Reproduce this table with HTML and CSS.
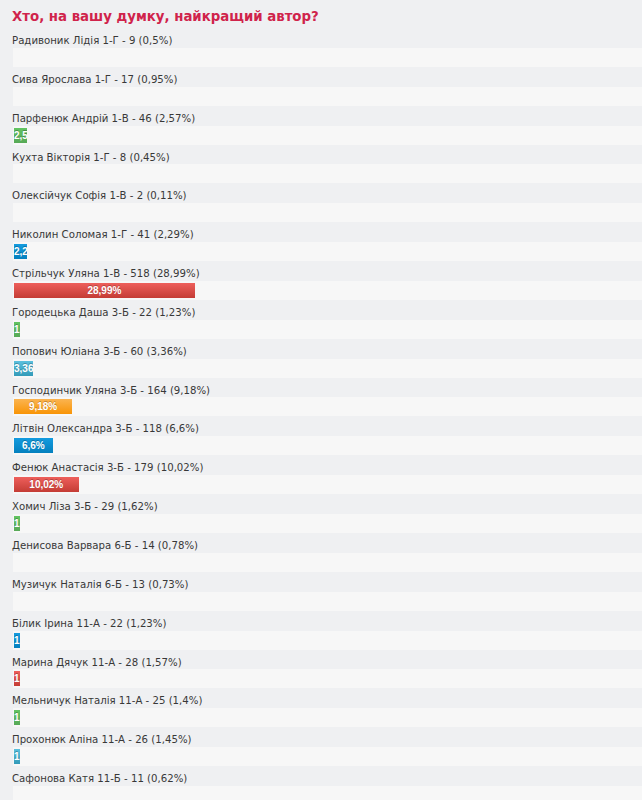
FILE: index.html
```html
<!DOCTYPE html>
<html lang="uk">
<head>
<meta charset="utf-8">
<title>Опитування</title>
<link rel="stylesheet" href="styles.css">
</head>
<body>
<div class="poll">
  <h2 class="poll-title">Хто, на вашу думку, найкращий автор?</h2>

  <div class="poll-item"><div class="poll-label">Радивоник Лідія 1-Г - 9 (0,5%)</div><div class="progress"></div></div>
  <div class="poll-item"><div class="poll-label">Сива Ярослава 1-Г - 17 (0,95%)</div><div class="progress"></div></div>
  <div class="poll-item"><div class="poll-label">Парфенюк Андрій 1-В - 46 (2,57%)</div><div class="progress"><div class="bar bar-success" style="width:2%">2,57%</div></div></div>
  <div class="poll-item"><div class="poll-label">Кухта Вікторія 1-Г - 8 (0,45%)</div><div class="progress"></div></div>
  <div class="poll-item"><div class="poll-label">Олексійчук Софія 1-В - 2 (0,11%)</div><div class="progress"></div></div>
  <div class="poll-item"><div class="poll-label">Николин Соломая 1-Г - 41 (2,29%)</div><div class="progress"><div class="bar bar-primary" style="width:2%">2,29%</div></div></div>
  <div class="poll-item"><div class="poll-label">Стрільчук Уляна 1-В - 518 (28,99%)</div><div class="progress"><div class="bar bar-danger" style="width:28%">28,99%</div></div></div>
  <div class="poll-item"><div class="poll-label">Городецька Даша 3-Б - 22 (1,23%)</div><div class="progress"><div class="bar bar-success" style="width:1%">1,23%</div></div></div>
  <div class="poll-item"><div class="poll-label">Попович Юліана 3-Б - 60 (3,36%)</div><div class="progress"><div class="bar bar-info" style="width:3%">3,36%</div></div></div>
  <div class="poll-item"><div class="poll-label">Господинчик Уляна 3-Б - 164 (9,18%)</div><div class="progress"><div class="bar bar-warning" style="width:9%">9,18%</div></div></div>
  <div class="poll-item"><div class="poll-label">Літвін Олександра 3-Б - 118 (6,6%)</div><div class="progress"><div class="bar bar-primary" style="width:6%">6,6%</div></div></div>
  <div class="poll-item"><div class="poll-label">Фенюк Анастасія 3-Б - 179 (10,02%)</div><div class="progress"><div class="bar bar-danger" style="width:10%">10,02%</div></div></div>
  <div class="poll-item"><div class="poll-label">Хомич Ліза 3-Б - 29 (1,62%)</div><div class="progress"><div class="bar bar-success" style="width:1%">1,62%</div></div></div>
  <div class="poll-item"><div class="poll-label">Денисова Варвара 6-Б - 14 (0,78%)</div><div class="progress"></div></div>
  <div class="poll-item"><div class="poll-label">Музичук Наталія 6-Б - 13 (0,73%)</div><div class="progress"></div></div>
  <div class="poll-item"><div class="poll-label">Білик Ірина 11-А - 22 (1,23%)</div><div class="progress"><div class="bar bar-primary" style="width:1%">1,23%</div></div></div>
  <div class="poll-item"><div class="poll-label">Марина Дячук 11-А - 28 (1,57%)</div><div class="progress"><div class="bar bar-danger" style="width:1%">1,57%</div></div></div>
  <div class="poll-item"><div class="poll-label">Мельничук Наталія 11-А - 25 (1,4%)</div><div class="progress"><div class="bar bar-success" style="width:1%">1,4%</div></div></div>
  <div class="poll-item"><div class="poll-label">Прохонюк Аліна 11-А - 26 (1,45%)</div><div class="progress"><div class="bar bar-info" style="width:1%">1,45%</div></div></div>
  <div class="poll-item"><div class="poll-label">Сафонова Катя 11-Б - 11 (0,62%)</div><div class="progress"></div></div>
</div>
</body>
</html>
```

FILE: styles.css
```css
html, body {
  margin: 0;
  padding: 0;
}

body {
  background: #eff0f2;
  font-family: "DejaVu Sans", Verdana, sans-serif;
  font-stretch: condensed;
  color: #383838;
}

.poll {
  padding: 0 0 0 12px;
  overflow: hidden;
}

.poll-title {
  margin: 0;
  padding-top: 6px;
  height: 22px;
  line-height: 20px;
  font-size: 14.8px;
  font-weight: bold;
  color: #d0234b;
  white-space: nowrap;
}

.poll-label {
  padding-top: 7px;
  line-height: 12.85px;
  font-size: 11.3px;
  white-space: nowrap;
}

.progress {
  box-sizing: border-box;
  width: 647px;
  height: 19px;
  margin-left: 1px;
  padding: 2px 0 2px 1px;
  background: #f7f7f7;
  overflow: hidden;
}

.bar {
  height: 15px;
  line-height: 15px;
  font-family: "Liberation Sans", Arial, sans-serif;
  font-stretch: normal;
  font-size: 10px;
  font-weight: bold;
  color: #fff;
  text-align: center;
  white-space: nowrap;
  overflow: hidden;
  text-shadow: 0 -1px 0 rgba(0, 0, 0, 0.25);
  background: linear-gradient(#149bdf, #0480be);
}

.bar-primary {
  background: linear-gradient(#149bdf, #0480be);
}

.bar-success {
  background: linear-gradient(#62c462, #57a957);
}

.bar-info {
  background: linear-gradient(#5bc0de, #339bb9);
}

.bar-warning {
  background: linear-gradient(#fbb450, #f89406);
}

.bar-danger {
  background: linear-gradient(#ee5f5b, #c43c35);
}
```
